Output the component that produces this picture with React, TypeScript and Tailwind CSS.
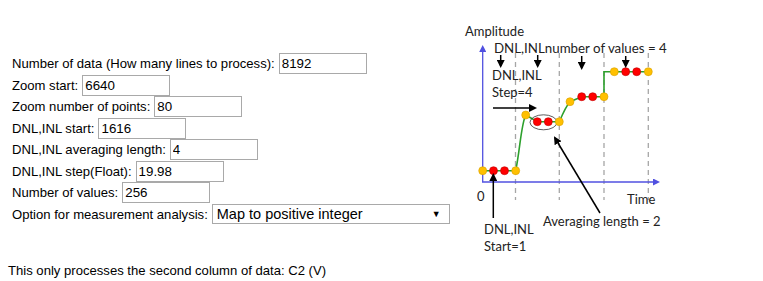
export default function App() {
  const rows = [
    { label: 'Number of data (How many lines to process):', value: '8192' },
    { label: 'Zoom start:', value: '6640' },
    { label: 'Zoom number of points:', value: '80' },
    { label: 'DNL,INL start:', value: '1616' },
    { label: 'DNL,INL averaging length:', value: '4' },
    { label: 'DNL,INL step(Float):', value: '19.98' },
    { label: 'Number of values:', value: '256' },
  ]

  const orange = '#ffc000'
  const red = '#ff0000'
  // dots of the step curve: [x, y, color]
  const dots: [number, number, string][] = [
    [482.7, 170.7, orange], [493.5, 170.7, red], [504.5, 170.7, red], [515.7, 170.7, orange],
    [525.7, 115, orange], [537.3, 121.7, red], [548.3, 121.7, red], [559.3, 121.7, orange],
    [570, 101.7, orange], [581.7, 96.7, red], [592.7, 96.7, red], [604, 96.7, orange],
    [614.3, 71.7, orange], [625.7, 71.7, red], [636.7, 71.7, red], [648.3, 71.7, orange],
  ]

  return (
    <div className="w-[763px] h-[281px] bg-white text-black font-['Liberation_Sans',Arial,sans-serif] text-[13.1px] leading-[15px]">
      <div className="flex">
        <div className="w-[462px] pl-[12px] pt-[53px]">
          {rows.map((r) => (
            <div key={r.label} className="h-[21.5px] flex items-center">
              <span>{r.label}</span>
              <input
                readOnly
                value={r.value}
                className="ml-[4px] w-[88px] h-[21px] border border-[#a9a9a9] pl-[2px] text-[13.33px] font-['Liberation_Sans',Arial,sans-serif] outline-none"
              />
            </div>
          ))}
          <div className="h-[21px] flex items-center">
            <span>Option for measurement analysis:</span>
            <div className="ml-[4px] w-[238px] h-[20px] border border-[#a9a9a9] flex items-center justify-between pl-[4px] pr-[8px] text-[14.5px]">
              <span>Map to positive integer</span>
              <span className="text-[9px]">▼</span>
            </div>
          </div>
        </div>

        <svg width="210" height="243" viewBox="462 20 210 243" className="mt-[20px] font-['Lato','Open_Sans',sans-serif]">
          <defs>
            <marker id="ab" markerWidth="8" markerHeight="8" refX="6" refY="4" orient="auto" markerUnits="userSpaceOnUse">
              <path d="M0,0 L8,4 L0,8 Z" fill="#000" />
            </marker>
            <marker id="abl" markerWidth="7" markerHeight="7" refX="5" refY="3.5" orient="auto" markerUnits="userSpaceOnUse">
              <path d="M0,0 L7,3.5 L0,7 Z" fill="#5050e0" />
            </marker>
          </defs>

          <text x="465" y="36" fontSize="13" fill="#222">Amplitude</text>

          {/* dashed grid */}
          {[515.5, 559.3, 604, 648.3].map((x) => (
            <line key={x} x1={x} y1="53" x2={x} y2="200" stroke="#a6a6a6" strokeWidth="1.3" strokeDasharray="5 4" />
          ))}

          {/* axes */}
          <line x1="482.7" y1="182" x2="482.7" y2="47" stroke="#5050e0" strokeWidth="1.3" markerEnd="url(#abl)" />
          <line x1="482" y1="182" x2="658" y2="182" stroke="#5050e0" strokeWidth="1.3" markerEnd="url(#abl)" />

          {/* step curve */}
          <path
            d="M482.7,170.7 L515.7,170.7 C520,150 521,125 525.7,115 L537.3,121.7 L559.3,121.7 C563,113 566,106 570,101.7 L581.7,96.7 L604,96.7 L604,71.7 L648.3,71.7"
            fill="none"
            stroke="#2ca02c"
            strokeWidth="1.6"
          />
          <ellipse cx="543.5" cy="122.3" rx="13.5" ry="7.5" fill="none" stroke="#333" strokeWidth="0.8" />
          {dots.map(([x, y, c], i) => (
            <circle key={i} cx={x} cy={y} r="4" fill={c} stroke={c === red ? '#c00000' : '#d9a000'} strokeWidth="0.6" />
          ))}

          {/* labels */}
          <text x="494" y="53" fontSize="13.3" fill="#222">DNL,INLnumber of values = 4</text>
          <text x="492" y="80" fontSize="13" fill="#222">DNL,INL</text>
          <text x="492" y="97" fontSize="13" fill="#222">Step=4</text>
          <text x="477" y="201" fontSize="13" fill="#222">0</text>
          <text x="627" y="204" fontSize="13" fill="#222">Time</text>
          <text x="543" y="226" fontSize="13" fill="#222">Averaging length = 2</text>
          <text x="484" y="234" fontSize="13" fill="#222">DNL,INL</text>
          <text x="484" y="251" fontSize="13" fill="#222">Start=1</text>

          {/* arrows */}
          <line x1="500.7" y1="55" x2="500.7" y2="66" stroke="#000" strokeWidth="1.5" markerEnd="url(#ab)" />
          <line x1="537.7" y1="55" x2="537.7" y2="66" stroke="#000" strokeWidth="1.5" markerEnd="url(#ab)" />
          <line x1="581.7" y1="56" x2="581.7" y2="68" stroke="#000" strokeWidth="1.5" markerEnd="url(#ab)" />
          <line x1="625.7" y1="56" x2="625.7" y2="66" stroke="#000" strokeWidth="1.5" markerEnd="url(#ab)" />
          <line x1="493" y1="108" x2="535" y2="108" stroke="#000" strokeWidth="1.5" markerEnd="url(#ab)" />
          <line x1="600" y1="213" x2="555" y2="138" stroke="#000" strokeWidth="1.5" markerEnd="url(#ab)" />
          <line x1="493.3" y1="218" x2="493.3" y2="175" stroke="#000" strokeWidth="1.5" markerEnd="url(#ab)" />
        </svg>
      </div>
      <p className="pl-[8px]">This only processes the second column of data: C2 (V)</p>
    </div>
  )
}
